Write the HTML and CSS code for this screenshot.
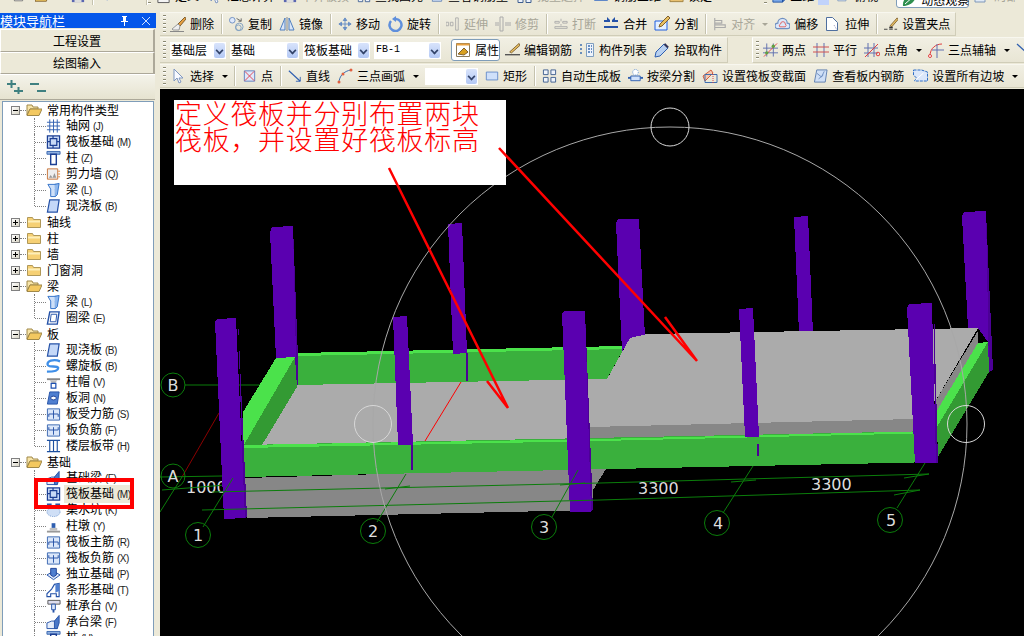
FILE: index.html
```html
<!DOCTYPE html>
<html lang="zh">
<head>
<meta charset="utf-8">
<title>模块导航栏</title>
<link rel="stylesheet" href="styles.css">
</head>
<body>
<svg class="defs" xmlns="http://www.w3.org/2000/svg">
  <symbol id="grid" viewBox="0 0 16 16"><path d="M1 4h14M1 8h14M1 12h14M4 1v14M8 1v14M12 1v14" stroke="#2f5fb0" fill="none"/></symbol>
  <symbol id="raft" viewBox="0 0 16 16"><path d="M1.500 1.500h13v13h-13zM4.500 4.500h7v7h-7zM1.500 7.500h3M11.500 7.500h3M7.500 1.500v3M7.500 11.500v3" stroke="#1c3f94" stroke-width="1.300" fill="#c8d9f6"/></symbol>
  <symbol id="col" viewBox="0 0 16 16"><path d="M1 1h14v3H1z" fill="#8fb0e0" stroke="#3a66b0"/><path d="M5 4h6v11H5z" fill="#fff" stroke="#1c3f94" stroke-width="1.500"/></symbol>
  <symbol id="wall" viewBox="0 0 16 16"><path d="M1.500 2.500h11v11h-11z" fill="#eee" stroke="#c8743a"/><path d="M3 12l2-3 2 3zM7 12l2-5 2 5z" fill="#999"/><path d="M13 5h2M13 8h2M13 11h2" stroke="#e08030"/></symbol>
  <symbol id="beam" viewBox="0 0 16 16"><path d="M2 2h11l-3 5v8H5V7z" fill="#cfe0f8" stroke="#2f6fc8"/><path d="M9 2l5-1-2 12-2 2" fill="#8fb8ee" stroke="#2f6fc8"/></symbol>
  <symbol id="slab" viewBox="0 0 16 16"><path d="M4 1.500h10L12 14.500H1.500z" fill="#c4d8f8" stroke="#2552a8" stroke-width="1.300"/></symbol>
  <symbol id="ring" viewBox="0 0 16 16"><path d="M4 1.500h10L12 14.500H1.500z" fill="#fff" stroke="#2552a8" stroke-width="1.500"/><path d="M5.500 4h6l-1 8H4.500z" fill="#fff" stroke="#2552a8"/></symbol>
  <symbol id="spiral" viewBox="0 0 16 16"><path d="M15 3C8 0 0 3 2 7c2 3 10 0 11 3 0 3-6 4-12 4" fill="none" stroke="#3f8fe8" stroke-width="2.500"/></symbol>
  <symbol id="cap" viewBox="0 0 16 16"><path d="M1 4h14v2H1z" fill="#888"/><path d="M4 6h8l-2 3H6z" fill="#bbb"/><path d="M5.500 9.500h5v5h-5z" fill="#fff" stroke="#1c4fb0" stroke-width="1.300"/></symbol>
  <symbol id="hole" viewBox="0 0 16 16"><path d="M4 1.500h10L12 14.500H1.500z" fill="#4f7fd0" stroke="#2552a8"/><ellipse cx="8" cy="8" rx="3" ry="2" fill="#fff" stroke="#1c3f94"/></symbol>
  <symbol id="bar" viewBox="0 0 16 16"><path d="M1.500 2.500h13v12h-13z" fill="#dbe7fa" stroke="#3a66b0"/><path d="M8 4v9M3 8h10M3 8v3M13 8v3" stroke="#2552a8" fill="none"/></symbol>
  <symbol id="nbar" viewBox="0 0 16 16"><path d="M1.500 2.500h13v12h-13z" fill="#dbe7fa" stroke="#3a66b0"/><path d="M3 5v3h10V5M8 5v8" stroke="#2552a8" fill="none"/></symbol>
  <symbol id="band" viewBox="0 0 16 16"><path d="M1 2h14M1 14h14M4 2v12M8 2v12M12 2v12" stroke="#1c4fa0" stroke-width="1.200" fill="none"/></symbol>
  <symbol id="sbeam" viewBox="0 0 16 16"><path d="M1 15V9l5-2h6v8z" fill="#e6eefb" stroke="#2552a8"/><path d="M9 7l5-6v8l-2 6H9z" fill="#4a78c8" stroke="#2552a8"/></symbol>
  <symbol id="pit" viewBox="0 0 16 16"><path d="M1 1h5v3H1zM10 1h5v3h-5z" fill="#2552a8"/><ellipse cx="8" cy="10" rx="7" ry="5" fill="#cfdff6" stroke="#6f97d0" stroke-dasharray="1 1"/></symbol>
  <symbol id="pier" viewBox="0 0 16 16"><path d="M1 13h14v2H1z" fill="#999"/><path d="M4 10h8v3H4z" fill="#c0c0c0"/><path d="M6 5h4v5H6z" fill="#2f5fb0"/></symbol>
  <symbol id="iso" viewBox="0 0 16 16"><path d="M1 9l7-4 7 4-7 5z" fill="#dbe7fa" stroke="#2552a8"/><path d="M5 2h6v7l-3 2-3-2z" fill="#4f7fd0" stroke="#1c3f94"/></symbol>
  <symbol id="strip" viewBox="0 0 16 16"><path d="M1 15v-3l5-5 3-5 5-1v14H11v-3H5v3z" fill="#fff" stroke="#2552a8" stroke-width="1.200"/><path d="M10 2l4-1v8l-4 2z" fill="#4f7fd0"/></symbol>
  <symbol id="pile" viewBox="0 0 16 16"><path d="M2 2h13v4H2z" fill="#dde" stroke="#555"/><path d="M6 6h4v6H6z" fill="#dbe7fa" stroke="#2552a8"/><path d="M7 12h2v3H7z" fill="#2552a8"/></symbol>
  <symbol id="fopen" viewBox="0 0 16 16"><path d="M1 3h5l1 2h5v2H4L1 13z" fill="#f7e4a8" stroke="#a08848"/><path d="M4 7h12l-3 6.500H1z" fill="#f3c860" stroke="#a08848"/></symbol>
  <symbol id="fclosed" viewBox="0 0 16 16"><path d="M1.500 3.500h5l1 2h7v8h-13z" fill="#f6d074" stroke="#b09858"/><path d="M2 6.500h12v2H2z" fill="#fdeeb8"/></symbol>
  <symbol id="del" viewBox="0 0 16 16"><path d="M15 1l-7 7 2 2 6-7z" fill="#e8a040" stroke="#806030"/><path d="M8 8l-6 5 1 1h6l1-4z" fill="#eee" stroke="#999"/><path d="M0 15.500h14" stroke="#888"/></symbol>
  <symbol id="copy" viewBox="0 0 16 16"><circle cx="3.500" cy="4" r="3" fill="#dfe9fb" stroke="#6f8fc0"/><circle cx="11" cy="11" r="4" fill="none" stroke="#7f9fc0"/><circle cx="10" cy="12" r="3" fill="none" stroke="#7f9fc0"/><path d="M8 2l5 3M13 2v3h-3" stroke="#666" fill="none"/></symbol>
  <symbol id="mirror" viewBox="0 0 16 16"><path d="M6 2L1 14h5zM10 2l5 12h-5z" fill="#d9e5f8" stroke="#4f7fc0"/><path d="M8 1v14" stroke="#888"/></symbol>
  <symbol id="move" viewBox="0 0 16 16"><path d="M8 1l2 3H6zM8 15l2-3H6zM1 8l3-2v4zM15 8l-3-2v4zM8 4v8M4 8h8" fill="#6f97d0" stroke="#5f87c0"/></symbol>
  <symbol id="rotate" viewBox="0 0 16 16"><path d="M4 5a6 6 0 1 0 5-2" fill="none" stroke="#5f8fdc" stroke-width="2.500"/><path d="M9 0v6L5 3z" fill="#5f8fdc"/></symbol>
  <symbol id="extend" viewBox="0 0 16 16"><path d="M0 6h3v4H0zM5 6h3v4H5zM11 1h3v14h-3z" fill="none" stroke="#aaa"/></symbol>
  <symbol id="trim" viewBox="0 0 16 16"><path d="M5 1h3v14H5zM0 7h4M10 7h6M0 9h4M10 9h6" fill="none" stroke="#aaa"/></symbol>
  <symbol id="break" viewBox="0 0 16 16"><path d="M1 5h5v2H1zM10 5h5v2h-5zM1 11h14v2H1zM8 2v3M8 8v2" fill="none" stroke="#aaa"/></symbol>
  <symbol id="merge" viewBox="0 0 16 16"><path d="M1 5h6M9 5h6M1 11h14" stroke="#2552a8" stroke-width="2"/><path d="M4 1l3 3-3 0zM12 1l-3 3 3 0z" fill="#2552a8"/></symbol>
  <symbol id="split" viewBox="0 0 16 16"><path d="M1 5h12v9H1z" fill="#e4f0ff" stroke="#1f5fe0"/><path d="M14 0l2 2-8 8-3 1 1-3z" fill="#e8c060" stroke="#806030"/></symbol>
  <symbol id="align" viewBox="0 0 16 16"><path d="M2 1v14M2 4h8v3H2zM2 9h12v3H2z" fill="none" stroke="#aaa" stroke-width="1.300"/></symbol>
  <symbol id="offset" viewBox="0 0 16 16"><path d="M3 13a3 3 0 0 1 0-6 5 5 0 0 1 10 0 3 3 0 0 1 0 6z" fill="#dce8fa" stroke="#6f8fc0" stroke-width="1.300"/><path d="M5 11a2 2 0 0 1 1-3 2.500 2.500 0 0 1 5 0 2 2 0 0 1 0 3z" fill="none" stroke="#e06060"/></symbol>
  <symbol id="stretch" viewBox="0 0 16 16"><path d="M1.500 1.500h6l5 5v8h-11z" fill="#fff" stroke="#4f6f9f"/><path d="M9 9l3 5" stroke="#99b" stroke-dasharray="1 1"/></symbol>
  <symbol id="gripic" viewBox="0 0 16 16"><path d="M15 1l1 2-7 8-2-1z" fill="#e8c060" stroke="#806030"/><path d="M0 14h4M6 14h4M12 14h3" stroke="#333"/><path d="M6 11h4v2H6z" fill="#333"/></symbol>
  <symbol id="prop" viewBox="0 0 16 16"><path d="M1.500 1.500h13v13h-13z" fill="#fff" stroke="#8a7a5a"/><path d="M1.500 1.500h13v2h-13z" fill="#e8a040"/><path d="M3 12l6-6 4 4-4 3z" fill="#d8a020" stroke="#806030"/></symbol>
  <symbol id="edit" viewBox="0 0 16 16"><path d="M15 1l1 2-9 8-2-1z" fill="#e8c060" stroke="#806030"/><path d="M0 13h16" stroke="#555" stroke-width="1.500"/></symbol>
  <symbol id="list" viewBox="0 0 16 16"><path d="M7.500 1.500h7v13h-7z" fill="#eef3fb" stroke="#7f9fc0"/><path d="M9 4h4M9 7h4M9 10h4M1 3h3M1 7h3M1 11h3" stroke="#3f6fb0" stroke-width="1.500" stroke-dasharray="2 1"/></symbol>
  <symbol id="pick" viewBox="0 0 16 16"><path d="M10 2l4 4-8 8-5 1 1-5z" fill="#b8d0f0" stroke="#2f5fb0"/><path d="M11 1l4 4-2 1-3-3z" fill="#335"/></symbol>
  <symbol id="two" viewBox="0 0 16 16"><path d="M4 1v14M11 1v14M0 6h16M0 11h16" stroke="#6070b0"/><path d="M1 15L15 1" stroke="#e04040"/><circle cx="4" cy="11" r="1.800" fill="#60a040"/><circle cx="11" cy="4" r="1.800" fill="#60a040"/></symbol>
  <symbol id="para" viewBox="0 0 16 16"><path d="M4 1v14M11 1v14" stroke="#6070b0"/><path d="M0 5h16M0 10h16" stroke="#d05050"/></symbol>
  <symbol id="angle" viewBox="0 0 16 16"><path d="M4 1v14M10 1v14M0 6h14M0 11h14" stroke="#6070b0"/><path d="M1 15L14 2" stroke="#e04040"/><circle cx="14" cy="12" r="1.800" fill="none" stroke="#e04040"/></symbol>
  <symbol id="aux" viewBox="0 0 16 16"><path d="M2 14C2 6 8 2 14 2" fill="none" stroke="#e04040"/><path d="M9 2v14M4 8h12" stroke="#6070b0"/><circle cx="2" cy="14" r="1.500" fill="#fff" stroke="#e04040"/></symbol>
  <symbol id="sel" viewBox="0 0 16 16"><path d="M4 1v12l3-3 2 5 2-1-2-4h4z" fill="#f8faff" stroke="#7f97c0"/></symbol>
  <symbol id="pt" viewBox="0 0 16 16"><path d="M2.500 2.500h11v11h-11z" fill="#e0e8fa" stroke="#5f7fc0"/><path d="M3 3l10 10M13 3L3 13" stroke="#e04050"/></symbol>
  <symbol id="ln" viewBox="0 0 16 16"><path d="M1 2l13 12" stroke="#2f5fb0" stroke-width="1.300"/><path d="M14 9v5H9" stroke="#2f5fb0" fill="none"/></symbol>
  <symbol id="arc" viewBox="0 0 16 16"><path d="M2 15C2 8 7 3 14 2" fill="none" stroke="#3f6fb0"/><circle cx="2" cy="14" r="1.500" fill="#e06040"/><circle cx="6" cy="6" r="1.500" fill="#e06040"/><circle cx="14" cy="2" r="1.500" fill="#e06040"/></symbol>
  <symbol id="rect" viewBox="0 0 16 16"><path d="M1.500 3.500h13v9h-13z" fill="#cfe0fa" stroke="#5f87c8"/></symbol>
  <symbol id="auto" viewBox="0 0 16 16"><path d="M1.500 1.500h5v5h-5zM9.500 1.500h5v5h-5zM1.500 9.500h5v5h-5zM9.500 9.500h5v5h-5z" fill="#eef3fb" stroke="#3f5f90"/></symbol>
  <symbol id="bsplit" viewBox="0 0 16 16"><path d="M0 10h16" stroke="#2f5fb0" stroke-width="2"/><path d="M3 8h10v5H3z" fill="#cfe0fa" stroke="#2f5fb0"/><circle cx="8" cy="4" r="3" fill="#fff" stroke="#5f8fd0" stroke-dasharray="1 1"/></symbol>
  <symbol id="sect" viewBox="0 0 16 16"><path d="M1 8l8-6 2 3-8 8z" fill="#f6c8b0" stroke="#d06040"/><path d="M3 13V6.500h12v8H3z" fill="none" stroke="#3f6fb0"/><path d="M11 6v10" stroke="#e04040" stroke-dasharray="1 1"/></symbol>
  <symbol id="view" viewBox="0 0 16 16"><path d="M4 1.500h11L13 14.500H1.500z" fill="#cfdff6" stroke="#5f7fb0"/><path d="M4 5l5 4 3-6M6 11l5-4" stroke="#6f8fc0" fill="none"/></symbol>
  <symbol id="slope" viewBox="0 0 16 16"><path d="M2 2h8l6 2v9H3l2-3-3-3z" fill="#dbe7fa" stroke="#2f6fc8" stroke-dasharray="3 1"/><path d="M4 12L12 5" stroke="#fff"/></symbol>
  <symbol id="tdoc" viewBox="0 0 16 16"><path d="M2 0h12v15H2z" fill="#f4f4f4" stroke="#555"/></symbol>
  <symbol id="tfold" viewBox="0 0 16 16"><path d="M0 14L4 4h12l-3 10z" fill="#f0c860" stroke="#806030"/></symbol>
  <symbol id="tdisk" viewBox="0 0 16 16"><path d="M1 0h14v15H1z" fill="#5a66b0"/><path d="M4 8h8v7H4z" fill="#ddd"/></symbol>
  <symbol id="tpen" viewBox="0 0 16 16"><path d="M8 14l6-12" stroke="#5f87d0" stroke-width="3"/></symbol>
  <symbol id="tcube" viewBox="0 0 16 16"><path d="M1 1h11v14H1z" fill="#7aa8e8" stroke="#1c4fa0"/><path d="M12 1l4-1v11l-4 4z" fill="#3f6fc0" stroke="#1c4fa0"/></symbol>
  <symbol id="tbox" viewBox="0 0 16 16"><path d="M1 9l5-8h9l-4 8v5H1z" fill="#e0eaf6" stroke="#7f97b8"/></symbol>
  <symbol id="tlock" viewBox="0 0 16 16"><path d="M1 1h14v13H1z" fill="#e8c070" stroke="#a08040"/><path d="M7 4h2v5H7z" fill="#705020"/></symbol>
  <symbol id="torbit" viewBox="0 0 16 16"><path d="M2 14C1 7 8 1 15 1c1 7-5 13-13 13z" fill="#2f8f4f"/><path d="M4 12l9-8" stroke="#fff"/></symbol>
</svg>

<div class="app">
  <header class="strip">
    <div class="strip-inner">
      <svg class="ic w11 first"><use href="#tdoc"/></svg>
      <svg class="ic w14 g3"><use href="#tfold"/></svg>
      <svg class="ic w14 g14"><use href="#tdisk"/></svg>
      <span class="sep"></span>
      <svg class="ic w11"><use href="#tpen"/></svg>
      <span class="sep g-far"></span>
      <span class="grip grip-top"></span>
      <span class="it"><svg class="ic w15"><use href="#tdoc"/></svg>定义</span>
      <span class="it"><svg class="ic w16"><use href="#sel"/></svg>汇总计算</span>
      <span class="it off"><svg class="ic w14"><use href="#tdisk"/></svg>平齐板顶</span>
      <span class="it"><svg class="ic w14"><use href="#auto"/></svg>查找图元</span>
      <span class="it"><svg class="ic w13"><use href="#view"/></svg>查看钢筋量</span>
      <span class="it off"><svg class="ic w17"><use href="#auto"/></svg>批量选择</span>
      <span class="it"><svg class="ic w16"><use href="#rect"/></svg>钢筋三维</span>
      <span class="it"><svg class="ic w15"><use href="#tlock"/></svg>锁定</span>
      <span class="grip grip-view"></span>
      <span class="it"><svg class="ic w14"><use href="#tcube"/></svg>二维</span>
      <span class="mini"></span>
      <span class="it"><svg class="ic w13"><use href="#tbox"/></svg>俯视</span>
      <span class="it on-top"><svg class="ic w16"><use href="#torbit"/></svg>动态观察</span>
      <span class="it off last"><svg class="ic w16"><use href="#tbox"/></svg>局部</span>
    </div>
  </header>

  <div class="body">
    <aside class="side">
      <div class="side-title"><span>模块导航栏</span>
        <span class="title-btns">
          <svg class="pin" viewBox="0 0 10 10"><path d="M3 0h5v1H7v4h2v1H6v4H5V6H2V5h2V1H3z" fill="#fff"/></svg>
          <svg class="pin" viewBox="0 0 10 10"><path d="M1 1l8 8M9 1l-8 8" stroke="#cfe0ff"/></svg>
        </span>
      </div>
      <button class="side-btn" type="button">工程设置</button>
      <button class="side-btn" type="button">绘图输入</button>
      <div class="side-tools">
        <svg class="pm" viewBox="0 0 16 14"><path d="M0 4h9M4.500 0v8M7 11h9M11.500 7v7" stroke="#3f8080" stroke-width="2" fill="none"/></svg>
        <svg class="pm" viewBox="0 0 16 14"><path d="M0 4h9M7 11h9" stroke="#3f8080" stroke-width="2" fill="none"/></svg>
      </div>
      <div class="panel">
        <ul class="tree">
          <li class="node"><span class="box"><i class="h"></i></span><span class="link"></span><svg class="ic w16"><use href="#fopen"/></svg><span>常用构件类型</span></li>
          <li class="leaf root"><svg class="ic w15"><use href="#grid"/></svg><span>轴网<b>(J)</b></span></li>
          <li class="leaf root"><svg class="ic w15"><use href="#raft"/></svg><span>筏板基础<b>(M)</b></span></li>
          <li class="leaf root"><svg class="ic w15"><use href="#col"/></svg><span>柱<b>(Z)</b></span></li>
          <li class="leaf root"><svg class="ic w15"><use href="#wall"/></svg><span>剪力墙<b>(Q)</b></span></li>
          <li class="leaf root"><svg class="ic w15"><use href="#beam"/></svg><span>梁<b>(L)</b></span></li>
          <li class="leaf root end"><svg class="ic w15"><use href="#slab"/></svg><span>现浇板<b>(B)</b></span></li>
          <li class="node"><span class="box"><i class="h"></i><i class="v"></i></span><span class="link"></span><svg class="ic w16"><use href="#fclosed"/></svg><span>轴线</span></li>
          <li class="node"><span class="box"><i class="h"></i><i class="v"></i></span><span class="link"></span><svg class="ic w16"><use href="#fclosed"/></svg><span>柱</span></li>
          <li class="node"><span class="box"><i class="h"></i><i class="v"></i></span><span class="link"></span><svg class="ic w16"><use href="#fclosed"/></svg><span>墙</span></li>
          <li class="node"><span class="box"><i class="h"></i><i class="v"></i></span><span class="link"></span><svg class="ic w16"><use href="#fclosed"/></svg><span>门窗洞</span></li>
          <li class="node"><span class="box"><i class="h"></i></span><span class="link"></span><svg class="ic w16"><use href="#fopen"/></svg><span>梁</span></li>
          <li class="leaf"><svg class="ic w15"><use href="#beam"/></svg><span>梁<b>(L)</b></span></li>
          <li class="leaf end"><svg class="ic w15"><use href="#ring"/></svg><span>圈梁<b>(E)</b></span></li>
          <li class="node"><span class="box"><i class="h"></i></span><span class="link"></span><svg class="ic w16"><use href="#fopen"/></svg><span>板</span></li>
          <li class="leaf"><svg class="ic w15"><use href="#slab"/></svg><span>现浇板<b>(B)</b></span></li>
          <li class="leaf"><svg class="ic w15"><use href="#spiral"/></svg><span>螺旋板<b>(B)</b></span></li>
          <li class="leaf"><svg class="ic w15"><use href="#cap"/></svg><span>柱帽<b>(V)</b></span></li>
          <li class="leaf"><svg class="ic w15"><use href="#hole"/></svg><span>板洞<b>(N)</b></span></li>
          <li class="leaf"><svg class="ic w15"><use href="#bar"/></svg><span>板受力筋<b>(S)</b></span></li>
          <li class="leaf"><svg class="ic w15"><use href="#nbar"/></svg><span>板负筋<b>(F)</b></span></li>
          <li class="leaf end"><svg class="ic w15"><use href="#band"/></svg><span>楼层板带<b>(H)</b></span></li>
          <li class="node"><span class="box"><i class="h"></i></span><span class="link"></span><svg class="ic w16"><use href="#fopen"/></svg><span>基础</span></li>
          <li class="leaf"><svg class="ic w15"><use href="#sbeam"/></svg><span>基础梁<b>(F)</b></span></li>
          <li class="leaf sel"><svg class="ic w15"><use href="#raft"/></svg><span>筏板基础<b>(M)</b></span></li>
          <li class="leaf"><svg class="ic w15"><use href="#pit"/></svg><span>集水坑<b>(K)</b></span></li>
          <li class="leaf"><svg class="ic w15"><use href="#pier"/></svg><span>柱墩<b>(Y)</b></span></li>
          <li class="leaf"><svg class="ic w15"><use href="#bar"/></svg><span>筏板主筋<b>(R)</b></span></li>
          <li class="leaf"><svg class="ic w15"><use href="#nbar"/></svg><span>筏板负筋<b>(X)</b></span></li>
          <li class="leaf"><svg class="ic w15"><use href="#iso"/></svg><span>独立基础<b>(P)</b></span></li>
          <li class="leaf"><svg class="ic w15"><use href="#strip"/></svg><span>条形基础<b>(T)</b></span></li>
          <li class="leaf"><svg class="ic w15"><use href="#pile"/></svg><span>桩承台<b>(V)</b></span></li>
          <li class="leaf"><svg class="ic w15"><use href="#sbeam"/></svg><span>承台梁<b>(F)</b></span></li>
          <li class="leaf"><svg class="ic w15"><use href="#col"/></svg><span>桩<b>(U)</b></span></li>
        </ul>
        <div class="callout"></div>
      </div>
    </aside>

    <main class="main">
      <div class="bars">
        <div class="row row1">
          <div class="tb">
            <span class="grip"></span>
            <span class="it"><svg class="ic w16"><use href="#del"/></svg>删除</span>
            <span class="sep"></span>
            <span class="it"><svg class="ic w15"><use href="#copy"/></svg>复制</span>
            <span class="it"><svg class="ic w16"><use href="#mirror"/></svg>镜像</span>
            <span class="sep"></span>
            <span class="it"><svg class="ic w14"><use href="#move"/></svg>移动</span>
            <span class="it"><svg class="ic w16"><use href="#rotate"/></svg>旋转</span>
            <span class="sep"></span>
            <span class="it off"><svg class="ic w14"><use href="#extend"/></svg>延伸</span>
            <span class="it off"><svg class="ic w16"><use href="#trim"/></svg>修剪</span>
            <span class="sep"></span>
            <span class="it off"><svg class="ic w14"><use href="#break"/></svg>打断</span>
            <span class="it"><svg class="ic w16"><use href="#merge"/></svg>合并</span>
            <span class="it"><svg class="ic w16"><use href="#split"/></svg>分割</span>
            <span class="sep"></span>
            <span class="it off"><svg class="ic w14"><use href="#align"/></svg>对齐<i class="caret"></i></span>
            <span class="it"><svg class="ic w15"><use href="#offset"/></svg>偏移</span>
            <span class="it"><svg class="ic w16"><use href="#stretch"/></svg>拉伸</span>
            <span class="sep"></span>
            <span class="it"><svg class="ic w14"><use href="#gripic"/></svg>设置夹点</span>
          </div>
        </div>
        <div class="row row2">
          <div class="tb">
            <span class="grip"></span>
            <div class="combos">
              <span class="combo c56">基础层<i class="drop"></i></span>
              <span class="combo c69">基础<i class="drop"></i></span>
              <span class="combo c67">筏板基础<i class="drop"></i></span>
              <span class="combo c67 latin">FB-1<i class="drop"></i></span>
            </div>
            <span class="it pressed"><svg class="ic w16"><use href="#prop"/></svg>属性</span>
            <span class="it"><svg class="ic w15"><use href="#edit"/></svg>编辑钢筋</span>
            <span class="it"><svg class="ic w16"><use href="#list"/></svg>构件列表</span>
            <span class="it"><svg class="ic w16"><use href="#pick"/></svg>拾取构件</span>
          </div>
          <div class="tb tb-right">
            <span class="grip"></span>
            <span class="it"><svg class="ic w15"><use href="#two"/></svg>两点</span>
            <span class="it"><svg class="ic w16"><use href="#para"/></svg>平行</span>
            <span class="it"><svg class="ic w16"><use href="#angle"/></svg>点角<i class="caret wide"></i></span>
            <span class="it"><svg class="ic w16"><use href="#aux"/></svg>三点辅轴<i class="caret wide"></i></span>
            <span class="it"><svg class="ic w16"><use href="#ln"/></svg></span>
          </div>
        </div>
        <div class="row row3">
          <div class="tb tb-flat">
            <span class="grip"></span>
            <span class="it"><svg class="ic w16"><use href="#sel"/></svg>选择<i class="caret wide"></i></span>
            <span class="sep"></span>
            <span class="it"><svg class="ic w15"><use href="#pt"/></svg>点</span>
            <span class="sep"></span>
            <span class="it"><svg class="ic w14"><use href="#ln"/></svg>直线</span>
            <span class="it"><svg class="ic w16"><use href="#arc"/></svg>三点画弧<i class="caret wide"></i></span>
            <span class="combo c53"><i class="drop"></i></span>
            <span class="it"><svg class="ic w14"><use href="#rect"/></svg>矩形</span>
            <span class="sep"></span>
            <span class="it"><svg class="ic w15"><use href="#auto"/></svg>自动生成板</span>
            <span class="it"><svg class="ic w15"><use href="#bsplit"/></svg>按梁分割</span>
            <span class="it"><svg class="ic w16"><use href="#sect"/></svg>设置筏板变截面</span>
            <span class="it"><svg class="ic w15"><use href="#view"/></svg>查看板内钢筋</span>
            <span class="it"><svg class="ic w17"><use href="#slope"/></svg>设置所有边坡<i class="caret wide"></i></span>
          </div>
        </div>
      </div>

      <svg class="scene" viewBox="160 89 864 547" xmlns="http://www.w3.org/2000/svg">
        <text class="dim" x="530" y="511">1000</text>
        <text class="dim" x="186" y="493">1000</text>

        <!-- lower body and axis lines behind the model -->
        <path class="axis" d="M185 385H260"/>
        <path class="dark" d="M219 413L182 477"/>
        <path class="axis" d="M160 477L222 476M162 490L239 484M160 512L182 477"/>
        <polygon class="g-side" points="245,478 593,468 606,469 593,490 593,510 247,518"/>

        <!-- back wall -->
        <polygon class="g-front" points="298,353 622,346 622,352 607,379 298,385"/>
        <polygon class="g-top" points="298,353 622,346 622,349 298,356"/>

        <!-- back columns -->
        <polygon class="c-side" points="293,226 298,358 298,387 296,387 293,357"/>
        <polygon class="col" points="270,232 272,227 293,226 296,357 276,358"/>
        <polygon class="c-side" points="466,353 468,353 468,381 466,381"/>
        <polygon class="col" points="448,224 462,223 467,353 453,354"/>
        <polygon class="col" points="616,223 618,219 639,219 645,337 630,338 622,352"/>
        <polygon class="col" points="794,217 808,216 813,333 799,333"/>
        <polygon class="c-side" points="986,211 993,370 989,372"/>
        <polygon class="col" points="962,216 964,212 986,211 989,372 988,342 978,328 968,328"/>

        <!-- slab surface -->
        <polygon class="g-side" points="590,427 913,419 913,433 590,441"/>
        <polygon class="g-side" points="978,331 978,343 936,412 936,400"/>
        <polygon class="surface" points="297,385 607,379 630,338 647,334 978,328 936,400 913,419 590,427 590,439 262,445"/>

        <!-- left wall -->
        <polygon class="g-dark" points="295,357 297,387 262,445 243,445"/>
        <polygon class="g-top" points="243,412 276,358 295,357 245,443 243,445"/>

        <!-- right wall -->
        <polygon class="g-dark" points="988,342 989,372 938,457 937,427"/>
        <polygon class="g-top" points="978,343 988,342 937,427 936,412"/>

        <!-- front wall -->
        <polygon class="g-front" points="243,445 937,431 937,462 243,477"/>
        <polygon class="g-top" points="243,445 600,439 937,431 937,433 600,441 243,448"/>
        <polygon class="c-side" points="411,445 413,445 413,470 411,470"/>
        <polygon class="c-side" points="757,444 759,444 759,456 757,456"/>

        <!-- front columns -->
        <polygon class="col" points="393,317 407,316 413,445 398,445"/>
        <polygon class="col" points="739,309 753,308 759,437 745,437"/>
        <polygon class="c-side" points="934,303 938,463 935,463"/>
        <polygon class="col" points="907,308 909,304 932,303 936,463 915,463"/>
        <polygon class="c-side" points="585,311 593,510 590,512"/>
        <polygon class="col" points="562,313 564,311 585,311 591,512 570,512"/>
        <polygon class="c-side" points="238,318 247,517 244,518"/>
        <polygon class="col" points="215,322 217,319 236,318 245,518 224,519"/>

        <!-- thin reference lines -->
        <path class="thin" d="M461 382L425 441"/>

        <!-- dimension lines and axis bubbles -->
        <g class="axis">
          <path d="M212 492L600 483 929 474M202 510L600 500 920 490"/>
          <path d="M233 478L203 527M406 474L377 522M578 470L552 517M753 466L723 513M925 463L897 508"/>
          <path d="M385 489L410 486M560 485L585 483M731 482L756 480M904 478L929 474M894 495L920 490"/>
          <circle cx="173" cy="385" r="12"/>
          <circle cx="173" cy="476" r="12"/>
          <circle cx="198" cy="535" r="12.500"/>
          <circle cx="373" cy="531" r="12.500"/>
          <circle cx="544" cy="527" r="12.500"/>
          <circle cx="717" cy="523" r="12.500"/>
          <circle cx="890" cy="520" r="12.500"/>
        </g>
        <text class="lab" x="173" y="391">B</text>
        <text class="lab" x="173" y="482">A</text>
        <text class="lab" x="198" y="541">1</text>
        <text class="lab" x="373" y="537">2</text>
        <text class="lab" x="544" y="533">3</text>
        <text class="lab" x="718" y="529">4</text>
        <text class="lab" x="891" y="526">5</text>
        <text class="dim" x="638" y="494">3300</text>
        <text class="dim" x="811" y="490">3300</text>

        <!-- orbit gizmo -->
        <circle class="orbit" cx="670" cy="424" r="297"/>
        <circle class="orbit-s" cx="670" cy="127" r="19"/>
        <circle class="orbit-s" cx="373" cy="424" r="18.500"/>
        <circle class="orbit-s" cx="966" cy="424" r="18.500"/>

        <!-- annotation -->
        <rect x="174" y="100" width="332" height="85" fill="#fff"/>
        <text class="note" x="175" y="124">定义筏板并分别布置两块</text>
        <text class="note" x="175" y="150">筏板，并设置好筏板标高</text>
        <path class="arrow" d="M389 168L508 408M487 381L508 408"/>
        <path class="arrow" d="M499 148L697 361M665 317L697 361"/>
      </svg>
    </main>
  </div>
</div>
</body>
</html>
```

FILE: styles.css
```css
* { box-sizing: border-box; }
html, body { margin: 0; padding: 0; height: 100%; }
body {
  width: 1024px;
  height: 636px;
  overflow: hidden;
  background: #ece9d8;
  font: 12px/16px "Noto Sans CJK SC", "Liberation Sans", sans-serif;
  color: #000;
}
.defs { display: none; }
.app { display: flex; flex-direction: column; height: 636px; }

/* clipped top strip */
.strip { height: 12px; overflow: hidden; flex: none; background: #ece9d8; }
.strip-inner { display: flex; align-items: flex-start; gap: 8px; margin-top: -12px; white-space: nowrap; }
.first { margin-left: 13px; margin-right: 3px; }
.g3 { margin-right: 14px; }
.g14 { margin-right: -1px; }
.strip-inner .sep { height: 17px; }
.g-far { margin-left: 26px; margin-right: -7px; }
.strip-inner .grip { height: 15px; margin-top: 2px; }
.grip-top { margin-right: 0; }
.grip-view { margin-left: 44px; margin-right: 0; }
.mini { width: 11px; height: 17px; margin-left: -4px; background: #c1d3fb; }
.on-top { margin-left: 10px; width: 73px; height: 20px; padding: 3px 0 0 4px; border: 1px solid #7f9db9; border-radius: 3px; background: #fff; gap: 6px; }
.last { margin-left: -3px; }

.body { display: flex; flex: 1; min-height: 0; }

/* sidebar */
.side { width: 156px; margin-top: 1px; display: flex; flex-direction: column; flex: none; background: #ece9d8; }
.side-title { height: 15px; flex: none; display: flex; justify-content: space-between; align-items: center; background: #0557ea; color: #fff; font-size: 13px; }
.title-btns { display: flex; gap: 12px; padding-right: 5px; }
.pin { width: 10px; height: 10px; display: block; }
.side-btn {
  display: block; flex: none; width: 155px; height: 23px; padding: 0; margin: 1px 0 0;
  font: 12px/16px "Noto Sans CJK SC", sans-serif; color: #000; background: #ece9d8;
  border: 1px solid; border-color: #fff #aca899 #aca899 #fff; border-width: 1px 2px 1px 1px;
}
.side-btn + .side-btn { height: 22px; margin-top: 0; }
.side-tools { height: 26px; flex: none; width: 155px; display: flex; align-items: center; gap: 7px; padding-left: 7px; background: linear-gradient(#f4f3ea, #e6e3d0); border-top: 1px solid #fff; border-bottom: 1px solid #aca899; }
.pm { width: 16px; height: 14px; }
.panel { position: relative; flex: 1; min-height: 0; margin: 1px 2px 0 2px; background: #fff; border: 1px solid #7f9db9; border-bottom: 0; overflow: hidden; }
.tree { list-style: none; margin: 0; padding: 0; }
.tree li { position: relative; height: 16px; display: flex; align-items: center; white-space: nowrap; }
.tree b { font: 400 10px/16px "Liberation Sans", sans-serif; letter-spacing: -.5px; margin-left: 3px; color: #222; }
.node { padding-left: 8px; }
.node .ic { margin-right: 5px; }
.box { position: relative; flex: none; width: 9px; height: 9px; border: 1px solid #808080; background: linear-gradient(135deg, #fff, #d8d4c4); }
.box .h { position: absolute; left: 1px; top: 3px; width: 5px; height: 1px; background: #000; }
.box .v { position: absolute; left: 3px; top: 1px; width: 1px; height: 5px; background: #000; }
.link { flex: none; width: 6px; border-top: 1px dotted #808080; }
.leaf { padding-left: 43px; }
.leaf .ic { margin-right: 5px; }
.leaf::before { content: ""; position: absolute; left: 31px; top: 0; bottom: 0; border-left: 1px dotted #808080; }
.leaf.end::before { bottom: 8px; }
.leaf::after { content: ""; position: absolute; left: 32px; width: 11px; top: 8px; border-top: 1px dotted #808080; }
.root { background: none; }
.tree .sel span { background: #ece9d8; margin-left: -2px; padding-left: 2px; }
.callout { position: absolute; left: 31px; top: 376px; width: 100px; height: 31px; border: 4px solid #f00; }

/* main */
.main { flex: 1; min-width: 0; margin-left: 4px; display: flex; flex-direction: column; }
.bars { flex: none; height: 77px; display: flex; flex-direction: column; gap: 1px; }
.row { display: flex; align-items: stretch; }
.row1 { height: 24px; }
.row2 { height: 26px; justify-content: space-between; }
.row3 { height: 24px; }
.tb { display: flex; align-items: center; gap: 7px; padding: 0 5px 0 3px; white-space: nowrap; background: linear-gradient(#f1efe3, #e8e5d4); border-right: 1px solid #d0cdb8; border-bottom: 1px solid #d0cdb8; border-top: 1px solid #f8f7ef; }
.tb-right { width: 272px; padding-right: 0; border-right: 0; border-left: 1px solid #fff; margin-left: 0; }
.tb-flat { flex: 1; overflow: hidden; border-right: 0; }
.row2 > .tb:first-child { width: 568px; }
.grip { flex: none; width: 3px; height: 18px; margin-right: -3px; background: repeating-linear-gradient(#8a8872 0 1px, #fff 1px 2px, transparent 2px 4px); }
.sep { flex: none; width: 1px; height: 20px; background: #c5c2ae; box-shadow: 1px 0 0 #fff; }
.it { display: inline-flex; align-items: center; gap: 4px; flex: none; }
.off { color: #a8a698; }
.ic { display: block; flex: none; height: 16px; }
.w11 { width: 11px; } .w13 { width: 13px; } .w14 { width: 14px; } .w15 { width: 15px; } .w16 { width: 16px; } .w17 { width: 17px; }
.caret { flex: none; width: 9px; height: 3px; display: block; position: relative; }
.caret::after { content: ""; display: block; margin-left: 3px; width: 0; height: 0; border: 3px solid transparent; border-top: 3px solid currentColor; border-bottom: 0; }
.caret.wide { width: 13px; margin-left: -4px; }
.caret.wide::after { margin-left: 8px; }
.off .caret { color: #a8a698; }

.combos { display: flex; gap: 4px; margin-right: 3px; }
.combo { position: relative; display: flex; flex: none; height: 17px; padding-left: 1px; align-items: center; justify-content: space-between; background: #fff; white-space: nowrap; }
.c53 { width: 53px; justify-content: flex-end; }
.c56 { width: 56px; }
.c67 { width: 67px; }
.c69 { width: 69px; }
.latin { font: 10px/16px "Liberation Mono", monospace; padding-left: 2px; }
.drop { flex: none; display: block; width: 11px; height: 15px; margin-right: 1px; border-radius: 2px; background: linear-gradient(#d8e3fb, #b4c9f5); position: relative; }
.drop::after { content: ""; position: absolute; left: 2px; top: 4px; width: 5px; height: 5px; border-right: 2px solid #33446a; border-bottom: 2px solid #33446a; transform: rotate(45deg) scale(.8); }
.pressed { width: 49px; height: 22px; padding-left: 3px; gap: 4px; margin-right: -2px; background: #fff; border: 1px solid #7f9db9; border-radius: 3px; }

/* scene */
.scene { flex: none; display: block; width: 864px; height: 547px; background: #000; }
.scene polygon { shape-rendering: crispEdges; }
.col { fill: #5a00b0; }
.c-side { fill: #4c0096; }
.g-front { fill: #3ab03d; }
.g-top { fill: #4be24b; }
.g-dark { fill: #339a33; }
.g-side { fill: #878787; }
.surface { fill: #ababab; }
.axis { stroke: #0b7d0b; fill: none; stroke-width: 1; }
.dark { stroke: #8b0000; fill: none; }
.thin { stroke: #f00; fill: none; stroke-width: 1; }
.orbit { fill: none; stroke: #a8a8a8; stroke-width: 1; }
.orbit-s { fill: none; stroke: #d8d8d8; stroke-width: 1; }
.lab { font: 16px "DejaVu Sans", sans-serif; fill: #ddd; text-anchor: middle; }
.dim { font: 16px "DejaVu Sans", sans-serif; fill: #ddd; }
.note { font: 300 27px "Noto Sans CJK SC", sans-serif; letter-spacing: .7px; fill: #f00; }
.arrow { stroke: #f00; stroke-width: 2.500; fill: none; }
```
